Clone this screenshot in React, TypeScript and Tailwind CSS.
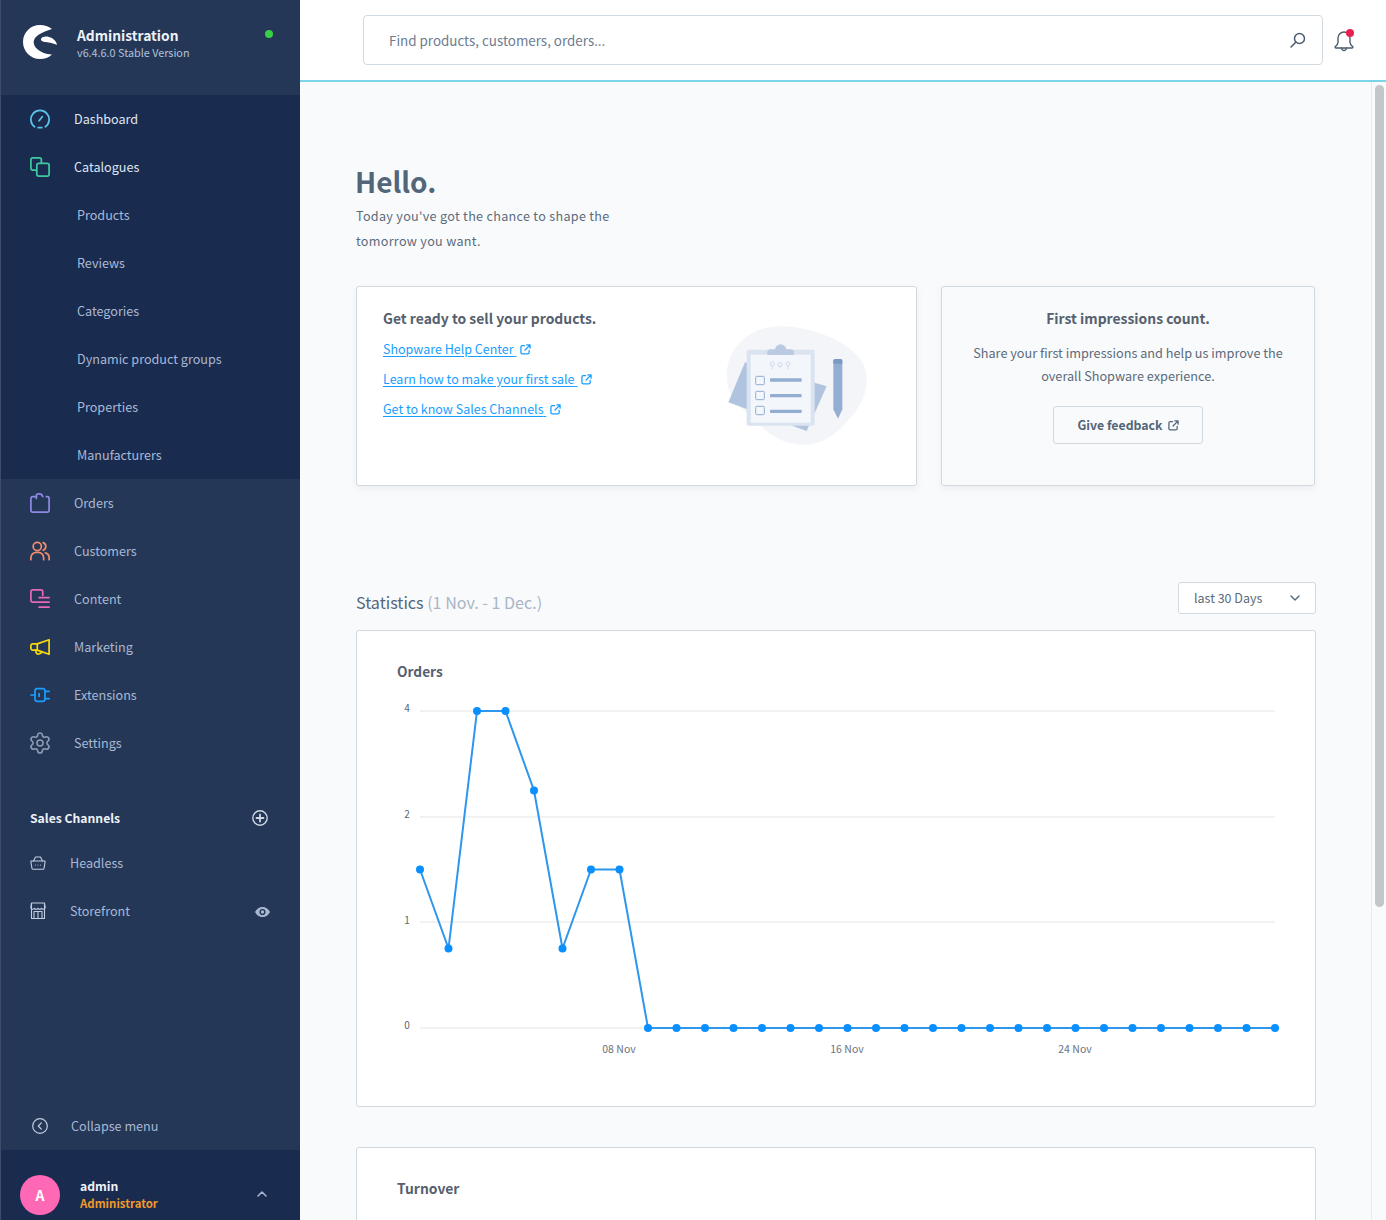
import { ChevronDown, ChevronUp, Settings } from 'lucide-react';

const orders = [1.5, 0.75, 4, 4, 2.5, 0.75, 1.5, 1.5, 0, 0, 0, 0, 0, 0, 0, 0, 0, 0, 0, 0, 0, 0, 0, 0, 0, 0, 0, 0, 0, 0, 0];

function valueY(v: number) {
  // the axis is not linear: 0, 1, 2, 4 are evenly spaced
  if (v <= 1) return 1028 - v * 106;
  if (v <= 2) return 922 - (v - 1) * 105;
  return 817 - ((v - 2) / 2) * 106;
}

function Ic({ children, className = '' }: { children: React.ReactNode; className?: string }) {
  return (
    <svg width="20" height="20" viewBox="0 0 22 22" fill="none" stroke="currentColor" strokeWidth="1.900" strokeLinecap="round" strokeLinejoin="round" className={className}>
      {children}
    </svg>
  );
}

const IconDashboard = () => (
  <Ic className="text-[#5cc4e6]">
    <path d="M5 19.500A10 10 0 1 1 17 19.500M9 20.500h4" />
    <path d="M10 13l3.500-4.500" />
  </Ic>
);
const IconCatalogues = () => (
  <Ic className="text-[#3fc9a2]">
    <path d="M6.500 14.500H3a2 2 0 0 1-2-2V3a2 2 0 0 1 2-2h7.500a2 2 0 0 1 2 2v3.500" />
    <rect x="7.500" y="7" width="13.500" height="14" rx="2" />
  </Ic>
);
const IconOrders = () => (
  <Ic className="text-[#8f87e6]">
    <path d="M7 4H3a2 2 0 0 0-2 2v13a2 2 0 0 0 2 2h16a2 2 0 0 0 2-2V6a2 2 0 0 0-2-2h-1" />
    <path d="M7 6V3a2 2 0 0 1 2-2h1a4 4 0 0 1 4 3" />
  </Ic>
);
const IconCustomers = () => (
  <Ic className="text-[#ef8d6c]">
    <circle cx="8" cy="6" r="4.500" />
    <path d="M1 20.500v-2a6 6 0 0 1 6-6h2a6 6 0 0 1 6 6v2" />
    <path d="M14.500 1.800a4.500 4.500 0 0 1 0 8.400M17 13a5.500 5.500 0 0 1 4 5.500v2" />
  </Ic>
);
const IconContent = () => (
  <Ic className="text-[#e768b6]">
    <path d="M9 14.500H3a2 2 0 0 1-2-2V3a2 2 0 0 1 2-2h9a2 2 0 0 1 2 2v4" />
    <path d="M10 9.500h11M10 14.500h11M10 20h11" />
  </Ic>
);
const IconMarketing = () => (
  <Ic className="text-[#f6d80e]">
    <path d="M8 7.500L21 3v16L8 14.500H3a2 2 0 0 1-2-2v-3a2 2 0 0 1 2-2h5z" />
    <path d="M8 7.500v7M6 14.500l1 3a2 2 0 0 0 2.500 1.200l3-1.200" />
  </Ic>
);
const IconExtensions = () => (
  <Ic className="text-[#189eff]">
    <rect x="5.500" y="4" width="11" height="14" rx="2.500" />
    <path d="M1 11h4.500M16.500 7H21M16.500 15H21M10 9.500v3" />
  </Ic>
);

const IconBasket = () => (
  <svg width="16" height="16" viewBox="0 0 16 16" fill="none" stroke="currentColor" strokeWidth="1.100" strokeLinejoin="round" strokeLinecap="round">
    <path d="M1 6h14v1.500l-1 6a1 1 0 0 1-1 .8H3a1 1 0 0 1-1-.8l-1-6V6z" />
    <path d="M3.500 6l2-4M12.500 6l-2-4M5.500 2h5M5.500 10h.01M8 10h.01M10.500 10h.01" />
  </svg>
);
const IconStore = () => (
  <svg width="16" height="18" viewBox="0 0 16 18" fill="none" stroke="currentColor" strokeWidth="1.100" strokeLinejoin="round">
    <path d="M1.500 1h13v15.500h-13z" />
    <path d="M1.500 1L.8 5.500a2 2 0 0 0 3.700.8 2 2 0 0 0 3.500 0 2 2 0 0 0 3.500 0 2 2 0 0 0 3.700-.8L14.500 1" />
    <path d="M4 16.500V9.500h8v7M8 9.500v7" />
  </svg>
);

const ExternalLink = ({ size = 12 }: { size?: number }) => (
  <svg width={size} height={size} viewBox="0 0 12 12" fill="none" stroke="currentColor" strokeWidth="1.400" strokeLinecap="round" strokeLinejoin="round" className="inline-block shrink-0">
    <path d="M5 1.800H2.500a1.500 1.500 0 0 0-1.500 1.500v6a1.500 1.500 0 0 0 1.500 1.500h6A1.500 1.500 0 0 0 10 9.300V7" />
    <path d="M7.500 1H11v3.500M11 1L5.500 6.500" />
  </svg>
);

function NavRow({ icon, label, active = false }: { icon: React.ReactNode; label: string; active?: boolean }) {
  return (
    <div className="flex h-12 items-center pl-[29px]">
      <span className="flex w-5 justify-center">{icon}</span>
      <span className={`ml-6 text-[12.600px] ${active ? 'text-[#dfe6f2]' : 'text-[#a9b9d4]'}`}>{label}</span>
    </div>
  );
}

function SubRow({ label }: { label: string }) {
  return <div className="flex h-12 items-center pl-[76px] text-[12.600px] text-[#a9b9d4]">{label}</div>;
}

function Sidebar() {
  return (
    <aside className="flex h-full w-[300px] shrink-0 flex-col border-l border-[#3c4c6a] bg-[#243757]">
      <div className="flex h-[95px] shrink-0 items-start pl-[22px] pt-[25px]">
        <svg width="34" height="34" viewBox="0 0 34 34" fill="#fff" className="shrink-0">
          <path d="M29 4C25.500 1.300 21.500 0 17 0 7.500 0 0 7.500 0 17c0 9.400 7.500 17 17 17 4.500 0 9-1.500 12-4.500C22 29.500 11 25 10.700 17.500 10.500 11 19 7 29 4z" />
          <path d="M18 14c1-2.500 5-3 8-2 4 1 7.500 4 8 8-4-2.200-9.500-2.500-12.500-3-2-.3-4-1.500-3.500-3z" />
        </svg>
        <div className="ml-[20px] flex flex-col">
          <span className="mt-[-1px] text-[13.800px] leading-[22px] font-semibold text-[#eef2f8]">Administration</span>
          <span className="text-[10.800px] leading-[13px] text-[#b4c1d8]">v6.4.6.0 Stable Version</span>
        </div>
        <span className="mt-[5px] ml-auto mr-[27px] h-2 w-2 rounded-full bg-[#37d046]" />
      </div>

      <div className="shrink-0 bg-[#1a2b50]">
        <NavRow icon={<IconDashboard />} label="Dashboard" active />
        <NavRow icon={<IconCatalogues />} label="Catalogues" active />
        <SubRow label="Products" />
        <SubRow label="Reviews" />
        <SubRow label="Categories" />
        <SubRow label="Dynamic product groups" />
        <SubRow label="Properties" />
        <SubRow label="Manufacturers" />
      </div>

      <NavRow icon={<IconOrders />} label="Orders" />
      <NavRow icon={<IconCustomers />} label="Customers" />
      <NavRow icon={<IconContent />} label="Content" />
      <NavRow icon={<IconMarketing />} label="Marketing" />
      <NavRow icon={<IconExtensions />} label="Extensions" />
      <NavRow icon={<Settings size={24} strokeWidth={1.600} className="shrink-0 text-[#8c9db3]" />} label="Settings" />

      <div className="mt-[31px] flex h-[41px] items-center pl-[29px] pr-[32px]">
        <span className="text-[12.200px] font-semibold text-[#eef2f8]">Sales Channels</span>
        <svg width="16" height="16" viewBox="0 0 16 16" fill="none" stroke="#cfd8e6" strokeWidth="1.400" strokeLinecap="round" className="ml-auto mb-[1px]">
          <circle cx="8" cy="8" r="7.200" />
          <path d="M8 4.500v7M4.500 8h7" strokeWidth="1.800" />
        </svg>
      </div>
      <div className="flex h-12 items-center pl-[29px] text-[#c3cfe0]">
        <span className="flex w-4 justify-center"><IconBasket /></span>
        <span className="ml-6 text-[12.600px] text-[#a9b9d4]">Headless</span>
      </div>
      <div className="flex h-12 items-center pl-[29px] pr-[30px] text-[#c3cfe0]">
        <span className="flex w-4 justify-center"><IconStore /></span>
        <span className="ml-6 text-[12.600px] text-[#a9b9d4]">Storefront</span>
        <svg width="15" height="10" viewBox="0 0 15 10" className="ml-auto mt-[2px]">
          <path d="M7.500 0C4.200 0 1.500 2 0 5c1.500 3 4.200 5 7.500 5s6-2 7.500-5C13.500 2 10.800 0 7.500 0z" fill="#a9b9d4" />
          <circle cx="7.500" cy="5" r="3.100" fill="#243757" />
          <circle cx="7.500" cy="5" r="1.700" fill="#a9b9d4" />
        </svg>
      </div>

      <div className="flex-1" />

      <div className="flex h-12 shrink-0 items-center pl-[31px]">
        <svg width="16" height="16" viewBox="0 0 16 16" fill="none" stroke="#c3cfe0" strokeWidth="1.200" strokeLinecap="round" strokeLinejoin="round">
          <circle cx="8" cy="8" r="7.300" />
          <path d="M9.300 4.800L6.300 8l3 3.200" />
        </svg>
        <span className="ml-[23px] text-[12.600px] text-[#a9b9d4]">Collapse menu</span>
      </div>
      <div className="flex h-[70px] shrink-0 items-start bg-[#1a2b50] pl-[19px] pr-[30px] pt-[25px]">
        <div className="flex h-10 w-10 shrink-0 items-center justify-center rounded-full bg-[#ff68b4] text-sm font-semibold text-white">A</div>
        <div className="ml-5 mt-[3px] flex flex-col">
          <span className="text-[12.200px] leading-[17px] font-semibold text-[#eef2f8]">admin</span>
          <span className="text-[11.400px] leading-[17px] font-semibold text-[#f0982a]">Administrator</span>
        </div>
        <ChevronUp size={16} strokeWidth={2.200} className="ml-auto mt-[11px] text-[#a9b9d4]" />
      </div>
    </aside>
  );
}

function TopBar() {
  return (
    <header className="flex h-[82px] shrink-0 items-start border-b-2 border-[#7bd5e8] bg-white pl-[63px] pt-[15px]">
      <div className="flex h-[50px] w-[960px] items-center rounded border border-[#d1d9e0] bg-white pl-[25px] pr-[16px]">
        <span className="text-[13.400px] text-[#6d7c8e]">Find products, customers, orders...</span>
        <svg width="16" height="16" viewBox="0 0 16 16" fill="none" stroke="#4c5c6e" strokeWidth="1.500" strokeLinecap="round" className="ml-auto">
          <circle cx="9.500" cy="6.500" r="5" />
          <path d="M5.800 10.200L1 15" />
        </svg>
      </div>
      <div className="relative ml-[10px] mt-[15px]">
        <svg width="22" height="22" viewBox="0 0 22 22" fill="none" stroke="#4c5c6e" strokeWidth="1.400" strokeLinecap="round" strokeLinejoin="round" className="block">
          <path d="M11 2a6 6 0 0 0-6 6v4.500c0 1.500-1.300 3-3 4.500 0 .6.400 1 1 1h16c.6 0 1-.4 1-1-1.700-1.500-3-3-3-4.500V8a6 6 0 0 0-6-6z" />
          <path d="M8.500 18c.2 1.400 1.200 2.500 2.500 2.500s2.300-1.100 2.500-2.500" />
        </svg>
        <span className="absolute right-[1px] top-[-1px] h-2 w-2 rounded-full bg-[#e8204d]" />
      </div>
    </header>
  );
}

function Illustration() {
  return (
    <svg width="220" height="170" viewBox="0 0 660 510" className="shrink-0">
      <path d="M110 225C115 130 195 78 280 82c90 5 190 40 235 105 30 45 15 115-30 165-30 35-70 80-130 85-70 5-120-30-155-70-25-28-90-50-90-142z" fill="#f3f5f9" />
      <path d="M165 190L410 262 350 396 115 310z" fill="#b1c4df" />
      <rect x="170" y="152" width="204" height="228" rx="6" fill="#dae3f0" />
      <rect x="182" y="167" width="180" height="204" fill="#f3f6fb" />
      <path d="M232 168v-8c0-6 5-9 10-9h13c2-8 8-15 17-15s15 7 17 15h13c5 0 10 3 10 9v8z" fill="#b9cae2" />
      <g fill="none" stroke="#cfdbeb" strokeWidth="3">
        <circle cx="247" cy="195" r="6" />
        <circle cx="270" cy="197" r="6" />
        <circle cx="294" cy="195" r="6" />
        <path d="M247 201v10M294 201v10M270 203v5" />
      </g>
      <g fill="#f3f6fb" stroke="#94aed3" strokeWidth="3">
        <rect x="197" y="232" width="26" height="25" rx="3" />
        <rect x="197" y="277" width="26" height="25" rx="3" />
        <rect x="197" y="322" width="26" height="25" rx="3" />
      </g>
      <g fill="#94aed3">
        <rect x="240" y="238" width="95" height="10" rx="2" />
        <rect x="240" y="285" width="95" height="10" rx="2" />
        <rect x="240" y="332" width="95" height="10" rx="2" />
      </g>
      <path d="M430 186c0-4 3-6 7-6h13c4 0 7 2 7 6v145l-13 28-14-28z" fill="#94aed3" />
      <path d="M430 186c0-4 3-6 7-6h13c4 0 7 2 7 6v8h-27z" fill="#7c99c4" />
    </svg>
  );
}

function OrdersChart() {
  const points = orders.map((v, i) => ({ x: 420 + i * 28.5, y: valueY(v) }));
  return (
    <svg width="958" height="415" viewBox="357 691 958 415" className="block" fontFamily="'Noto Sans CJK SC', sans-serif">
      {[711, 817, 922, 1028].map((y) => (
        <line key={y} x1="420" x2="1275" y1={y} y2={y} stroke="#e3e5e8" strokeWidth="1" />
      ))}
      {[['4', 712], ['2', 818], ['1', 924], ['0', 1029]].map(([t, y]) => (
        <text key={t} x="407" y={y} fontSize="10" fill="#5c6670" textAnchor="middle">{t}</text>
      ))}
      {[['08 Nov', 619], ['16 Nov', 847], ['24 Nov', 1075]].map(([t, x]) => (
        <text key={t} x={x} y="1053" fontSize="10.500" fill="#6b7480" textAnchor="middle">{t}</text>
      ))}
      <polyline points={points.map((p) => `${p.x},${p.y}`).join(' ')} fill="none" stroke="#2e96ec" strokeWidth="2" strokeLinejoin="round" />
      {points.map((p) => (
        <circle key={p.x} cx={p.x} cy={p.y} r="4" fill="#0a8fff" />
      ))}
    </svg>
  );
}

export default function App() {
  const links = ['Shopware Help Center', 'Learn how to make your first sale', 'Get to know Sales Channels'];
  return (
    <div className="flex h-[1220px] w-[1386px] overflow-hidden bg-[#f9fafb] font-['Noto_Sans_CJK_SC',sans-serif]">
      <Sidebar />
      <div className="flex min-w-0 flex-1 flex-col">
        <TopBar />
        <div className="flex min-h-0 flex-1">
          <main className="w-[1071px] shrink-0 overflow-hidden pl-[56px] pr-[55px] pt-[78px]">
            <h1 className="ml-[-1px] text-[28px] leading-[43px] font-semibold text-[#52667a]">Hello.</h1>
            <p className="w-[300px] text-[12.600px] leading-[25px] tracking-[0.3px] text-[#5b6b7b]">Today you've got the chance to shape the tomorrow you want.</p>

            <div className="mt-[33px] flex gap-6">
              <section className="flex h-[200px] w-[561px] shrink-0 rounded-[3px] border border-[#d1d9e0] bg-white pl-[26px] pt-[19px] shadow-[0_3px_6px_0_rgba(120,138,155,0.1)]">
                <div className="flex-1">
                  <h2 className="text-[13.900px] leading-[24px] font-semibold text-[#56606e]">Get ready to sell your products.</h2>
                  <div className="mt-[4px] flex flex-col">
                    {links.map((l) => (
                      <a key={l} className="flex h-[30px] items-center gap-[4px] text-[12.500px] text-[#189eff]">
                        <span className="underline underline-offset-2">{l}&nbsp;</span>
                        <ExternalLink size={11} />
                      </a>
                    ))}
                  </div>
                </div>
                <div className="mr-[6px] mt-[-7px]"><Illustration /></div>
              </section>

              <section className="flex h-[200px] w-[374px] shrink-0 flex-col items-center rounded-[3px] border border-[#d1d9e0] bg-[#f9fafb] pt-[19px] shadow-[0_3px_6px_0_rgba(120,138,155,0.1)]">
                <h2 className="text-[13.900px] leading-[24px] font-semibold text-[#56606e]">First impressions count.</h2>
                <p className="mt-[11px] w-[330px] text-center text-[12.700px] leading-[23px] text-[#5b6b7b]">Share your first impressions and help us improve the overall Shopware experience.</p>
                <button className="mt-[19px] flex h-[38px] w-[150px] items-center justify-center gap-[5px] rounded-[3px] border border-[#d1d9e0] text-[12.300px] font-semibold text-[#52667a]">
                  Give feedback <ExternalLink size={11} />
                </button>
              </section>
            </div>

            <div className="mt-[96px] flex h-8 items-center justify-between">
              <h2 className="mt-[8px] text-[16.100px] text-[#52667a]">Statistics <span className="text-[#a9b6c6]">(1 Nov. - 1 Dec.)</span></h2>
              <div className="flex h-8 w-[138px] items-center rounded-[3px] border border-[#d1d9e0] bg-white pl-[15px] pr-[12px] text-[12.500px] text-[#5b6b7b]">
                last 30 Days
                <ChevronDown size={16} strokeWidth={2} className="ml-auto text-[#52667a]" />
              </div>
            </div>

            <section className="mt-4 h-[477px] w-[960px] rounded-[3px] border border-[#d1d9e0] bg-white">
              <h3 className="h-[60px] pl-[40px] pt-[28px] text-[13.700px] leading-[24px] font-semibold text-[#56606e]">Orders</h3>
              <OrdersChart />
            </section>

            <section className="mt-10 h-[300px] w-[960px] rounded-[3px] border border-[#d1d9e0] bg-white">
              <h3 className="pl-[40px] pt-[28px] text-[13.900px] leading-[24px] font-semibold text-[#56606e]">Turnover</h3>
            </section>
          </main>
          <div className="w-[15px] shrink-0 border-l border-[#e8ebee] bg-[#f9fafb] pl-[3px] pt-[3px]">
            <div className="h-[822px] w-[9px] rounded-full bg-[#c4c7ca]" />
          </div>
        </div>
      </div>
    </div>
  );
}
